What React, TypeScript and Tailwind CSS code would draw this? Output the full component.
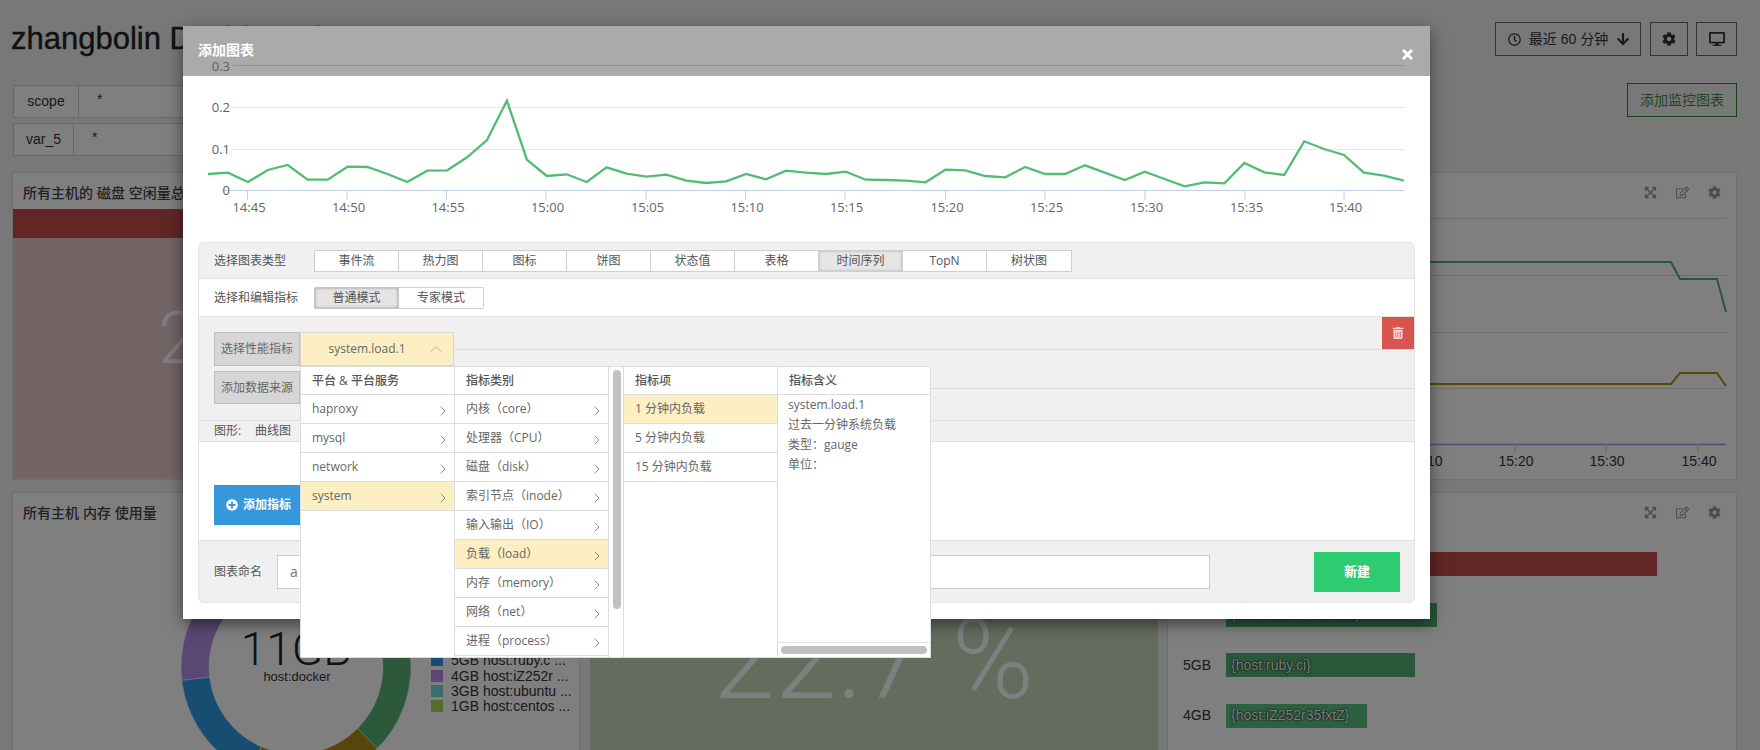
import React from 'react';
import { ChevronRight, ChevronUp } from 'lucide-react';
import {
  FaArrowDown,
  FaCog,
  FaDesktop,
  FaExpandArrowsAlt,
  FaPlusCircle,
  FaRegClock,
  FaRegEdit,
  FaTimes,
  FaTrashAlt,
} from 'react-icons/fa';

const chartTypes = ['事件流', '热力图', '图标', '饼图', '状态值', '表格', '时间序列', 'TopN', '树状图'];
const platforms = ['haproxy', 'mysql', 'network', 'system'];
const categories = [
  '内核（core）',
  '处理器（CPU）',
  '磁盘（disk）',
  '索引节点（inode）',
  '输入输出（IO）',
  '负载（load）',
  '内存（memory）',
  '网络（net）',
  '进程（process）',
];
const metrics = ['1 分钟内负载', '5 分钟内负载', '15 分钟内负载'];

// y of each minute from 14:43 to 15:43, in px
const loadSeries = [
  342, 338, 366, 330, 315, 359, 359, 320, 321, 342, 366, 332, 331, 292, 240, 122, 299, 348, 343, 366, 322, 341, 350,
  344, 362, 369, 364, 342, 358, 332, 338, 342, 335, 359, 360, 362, 367, 329, 331, 348, 352, 321, 342, 342, 316, 338,
  360, 335, 357, 379, 367, 370, 309, 337, 345, 244, 267, 285, 338, 347, 362,
].map((v, i) => `${(208 + i * 19.93).toFixed(1)},${(60 + v / 3).toFixed(1)}`);

const loadTicks = [
  ['14:45', 247.5],
  ['14:50', 347],
  ['14:55', 446.5],
  ['15:00', 546],
  ['15:05', 646],
  ['15:10', 745.5],
  ['15:15', 845],
  ['15:20', 945.5],
  ['15:25', 1045],
  ['15:30', 1145],
  ['15:35', 1245],
  ['15:40', 1344],
] as const;

const donutParts = [
  { from: 0, to: 135, color: '#56b274' },
  { from: 135, to: 203.6, color: '#ac8c12' },
  { from: 203.6, to: 263.4, color: '#2f9ae0' },
  { from: 263.4, to: 312, color: '#b48ee6' },
  { from: 312, to: 349, color: '#74dcdc' },
  { from: 349, to: 360, color: '#a4dc54' },
];

const legend = [
  { label: '5GB host:ruby.c ...', color: '#2f9ae0', y: 654 },
  { label: '4GB host:iZ252r ...', color: '#b48ee6', y: 670 },
  { label: '3GB host:ubuntu ...', color: '#74dcdc', y: 685 },
  { label: '1GB host:centos ...', color: '#a4dc54', y: 700 },
];

const memoryBars = [
  { label: '11GB', host: '{host:docker}', width: 431, color: 'bg-[#c44c4c]' },
  { label: '6GB', host: '{host:iZ25bn3sbxbZ}', width: 211, color: 'bg-[#52ae72]' },
  { label: '5GB', host: '{host:ruby.ci}', width: 189, color: 'bg-[#52ae72]' },
  { label: '4GB', host: '{host:iZ252r35fxtZ}', width: 141, color: 'bg-[#58c07e]' },
];

function arcPath(from: number, to: number) {
  const cx = 296;
  const cy = 667;
  const outer = 115;
  const inner = 87;
  const point = (r: number, deg: number) => {
    const a = ((deg - 90) * Math.PI) / 180;
    return `${(cx + r * Math.cos(a)).toFixed(2)} ${(cy + r * Math.sin(a)).toFixed(2)}`;
  };
  const large = to - from > 180 ? 1 : 0;
  return `M${point(outer, from)} A${outer} ${outer} 0 ${large} 1 ${point(outer, to)} L${point(inner, to)} A${inner} ${inner} 0 ${large} 0 ${point(inner, from)} Z`;
}

function PanelIcons() {
  return (
    <div className="absolute right-[15px] top-[13px] flex items-center gap-[19px] text-[13px] text-[#9a9a9a]">
      <FaExpandArrowsAlt />
      <FaRegEdit />
      <FaCog />
    </div>
  );
}

function MenuRow({ label, active, arrow }: { label: string; active?: boolean; arrow?: boolean }) {
  return (
    <div
      className={`flex h-[29px] items-center justify-between border-b border-[#dcdcdc] pl-[11px] pr-[3px] ${
        active ? 'bg-[#fbefc3]' : 'bg-white'
      }`}
    >
      <span className="-mt-[1px]">{label}</span>
      {arrow && <ChevronRight size={16} strokeWidth={1} className="mt-[3px] text-[#555]" />}
    </div>
  );
}

function MenuHeader({ label }: { label: string }) {
  return <div className="flex h-[28px] items-center border-b border-[#dcdcdc] pl-[11px] font-medium text-[#555]">{label}</div>;
}

function LoadChart() {
  return (
    <svg viewBox="183 60 1247 182" className="relative -mt-[16px] block h-[182px] w-[1247px]">
      <line x1="233" x2="1404" y1="65.5" y2="65.5" stroke="#939393" />
      <line x1="233" x2="1404" y1="107.5" y2="107.5" stroke="#e6e6e6" />
      <line x1="233" x2="1404" y1="149.5" y2="149.5" stroke="#e6e6e6" />
      <line x1="222" x2="1404" y1="190.5" y2="190.5" stroke="#c0d0e0" />
      {[
        ['0.3', 71],
        ['0.2', 112],
        ['0.1', 154],
        ['0', 195],
      ].map(([t, y]) => (
        <text key={t} x="230" y={y} textAnchor="end" fontSize="13" fill="#5f5f5f">
          {t}
        </text>
      ))}
      {loadTicks.map(([t, x]) => (
        <g key={t}>
          <line x1={x} x2={x} y1="190" y2="200" stroke="#c0d0e0" />
          <text x={x + 1.5} y="212" textAnchor="middle" fontSize="13" fill="#666">
            {t}
          </text>
        </g>
      ))}
      <polyline points={loadSeries.join(' ')} fill="none" stroke="#52bc74" strokeWidth="2.3" />
    </svg>
  );
}

function MetricDropdown() {
  return (
    <div className="absolute left-[117px] top-[306px] w-[631px] text-[12px] text-[#666]">
      <div className="relative flex h-[34px] w-[154px] items-center justify-center border border-[#d6d6d6] bg-[#fbefc3] pr-[26px]">
        <span className="pl-[6px]">system.load.1</span>
        <ChevronUp size={20} strokeWidth={0.8} className="absolute right-[7px] text-[#999]" />
      </div>
      <div className="flex h-[292px] border border-[#dcdcdc] bg-white">
        <div className="w-[154px] border-r border-[#dcdcdc]">
          <MenuHeader label="平台 & 平台服务" />
          {platforms.map((p) => (
            <MenuRow key={p} label={p} arrow active={p === 'system'} />
          ))}
        </div>
        <div className="w-[154px] border-r border-[#dcdcdc]">
          <MenuHeader label="指标类别" />
          {categories.map((c) => (
            <MenuRow key={c} label={c} arrow active={c === '负载（load）'} />
          ))}
        </div>
        <div className="w-[15px] border-r border-[#dcdcdc] pl-[4px] pt-[3px]">
          <div className="h-[239px] w-[8px] rounded bg-[#c1c1c1]" />
        </div>
        <div className="w-[154px] border-r border-[#dcdcdc]">
          <MenuHeader label="指标项" />
          {metrics.map((m, i) => (
            <MenuRow key={m} label={m} active={i === 0} />
          ))}
        </div>
        <div className="flex flex-1 flex-col">
          <MenuHeader label="指标含义" />
          <div className="flex-1 pl-[10px] leading-[20px]">
            <div>system.load.1</div>
            <div>过去一分钟系统负载</div>
            <div>类型：gauge</div>
            <div>单位：</div>
          </div>
          <div className="flex h-[15px] items-center border-t border-[#e4e4e4] px-[3px]">
            <div className="h-[8px] w-full rounded bg-[#c1c1c1]" />
          </div>
        </div>
      </div>
    </div>
  );
}

function AddChartModal() {
  return (
    <div className="absolute left-[183px] top-[26px] h-[593px] w-[1247px] bg-white font-['Open_Sans','Noto_Sans_CJK_SC',sans-serif] shadow-[0_5px_15px_rgba(0,0,0,0.5)]">
      <div className="flex h-[50px] items-center justify-between bg-[#aaaaaa] pl-[15px] pr-[15px]">
        <span className="-mt-[3px] text-[14px] font-bold text-white">添加图表</span>
        <FaTimes className="mt-[6px] text-[15px] text-white" />
      </div>
      <LoadChart />
      <div className="mx-[15px] h-[361px] w-[1217px] rounded-[6px] border border-[#e4e4e4] bg-[#f0f0f0] text-[12px] text-[#555]">
        <div className="flex h-[36px] items-center border-b border-[#e4e4e4] pl-[15px]">
          <span className="w-[100px]">选择图表类型</span>
          <div className="flex border border-[#cfcfcf] bg-white">
            {chartTypes.map((t) => (
              <div
                key={t}
                className={`flex h-[20px] w-[84px] items-center justify-center border-r border-[#cfcfcf] last:border-r-0 ${
                  t === '时间序列' ? 'bg-[#e6e6e6] shadow-[inset_0_0_3px_rgba(0,0,0,0.25)]' : ''
                }`}
              >
                {t}
              </div>
            ))}
          </div>
        </div>
        <div className="flex h-[38px] items-center border-b border-[#e4e4e4] bg-white pl-[15px]">
          <span className="w-[100px]">选择和编辑指标</span>
          <div className="flex h-[22px] w-[85px] items-center justify-center rounded-l-[2px] border border-[#c4c4c4] bg-[#e4e4e4] shadow-[inset_0_0_3px_rgba(0,0,0,0.35)]">
            普通模式
          </div>
          <div className="flex h-[22px] w-[85px] items-center justify-center rounded-r-[2px] border border-l-0 border-[#cfcfcf]">
            专家模式
          </div>
        </div>
        <div className="flex h-[103px]">
          <div className="w-[101px] shrink-0 pl-[15px] pt-[15px]">
            <div className="flex h-[34px] w-[86px] items-center justify-center border border-[#bdbdbd] bg-[#d6d6d6] text-[#666]">
              选择性能指标
            </div>
            <div className="mt-[5px] flex h-[33px] w-[86px] items-center justify-center border border-[#bdbdbd] bg-[#d6d6d6] text-[#666]">
              添加数据来源
            </div>
          </div>
          <div className="flex-1">
            <div className="flex h-[33px] justify-end border-b border-[#dcdcdc]">
              <div className="flex w-[32px] items-center justify-center bg-[#d9534f] text-[12px] text-[#f6d5d5]">
                <FaTrashAlt />
              </div>
            </div>
            <div className="h-[39px] border-b border-[#dcdcdc]" />
            <div className="h-[31px]" />
          </div>
        </div>
        <div className="flex h-[22px] items-center border-y border-[#e0e0e0] pl-[15px]">
          <span className="w-[41px]">图形:</span>
          <span>曲线图</span>
        </div>
        <div className="h-[98px] bg-white pl-[15px] pt-[43px]">
          <div className="flex h-[40px] w-[100px] items-center bg-[#3498db] pl-[12px] font-bold text-white">
            <FaPlusCircle className="mr-[5px] text-[12px]" />
            添加指标
          </div>
        </div>
        <div className="flex h-[62px] items-center border-t border-[#dcdcdc] pl-[15px]">
          <span className="w-[63px]">图表命名</span>
          <input
            readOnly
            value="a"
            className="h-[34px] w-[933px] border border-[#cfcfcf] bg-white pl-[12px] text-[14px] text-[#777] outline-none"
          />
          <div className="ml-[104px] flex h-[40px] w-[86px] items-center justify-center bg-[#2ecc71] text-[13px] font-bold text-white">
            新建
          </div>
        </div>
      </div>
      <MetricDropdown />
    </div>
  );
}

export default function App() {
  return (
    <div className="relative h-[750px] w-[1760px] overflow-hidden bg-[#f0f0f0] font-['Liberation_Sans','Noto_Sans_CJK_SC',sans-serif] text-[#333]">
      <header className="flex h-[83px] justify-between pl-[11px] pr-[23px] pt-[22px]">
        <h1 className="text-[31px] leading-[34px] text-[#222] [-webkit-text-stroke:0.4px_#222]">zhangbolin Dashboard</h1>
        <div className="flex gap-[8px] text-[14px] text-[#333]">
          <div className="mr-[1px] flex h-[34px] w-[146px] items-center justify-center gap-[8px] border border-[#666] pl-[2px]">
            <FaRegClock className="text-[13px]" />
            最近 60 分钟
            <FaArrowDown className="text-[14px]" />
          </div>
          <div className="flex h-[34px] w-[38px] items-center justify-center border border-[#666]">
            <FaCog className="text-[14px]" />
          </div>
          <div className="flex h-[34px] w-[41px] items-center justify-center border border-[#666]">
            <FaDesktop className="text-[16px]" />
          </div>
        </div>
      </header>

      <div className="flex h-[89px] justify-between pl-[13px] pr-[23px] text-[14px]">
        <div className="pt-[2px]">
          <div className="flex h-[33px] w-[420px] items-center border border-[#cfcfcf] bg-white">
            <span className="flex h-full w-[65px] items-center justify-center border-r border-[#cfcfcf]">scope</span>
            <span className="-mt-[5px] pl-[18px]">*</span>
          </div>
          <div className="mt-[5px] flex h-[33px] w-[420px] items-center border border-[#cfcfcf] bg-white">
            <span className="flex h-full w-[60px] items-center justify-center border-r border-[#cfcfcf]">var_5</span>
            <span className="-mt-[5px] pl-[18px]">*</span>
          </div>
        </div>
        <div className="flex h-[34px] w-[110px] items-center justify-center border border-[#2f7d34] text-[#3f8f45]">
          添加监控图表
        </div>
      </div>

      <div className="grid grid-cols-[568px_568px_570px] grid-rows-[308px_300px] gap-x-[9.5px] gap-y-[12px] pl-[12px]">
        <div className="flex flex-col border border-[#dedede] bg-white">
          <div className="flex h-[36px] items-center pl-[10px] pt-[4px] text-[14px] font-medium text-[#444]">
            所有主机的 磁盘 空闲量总和
          </div>
          <div className="h-[29px] shrink-0 bg-[#c44c4c]" />
          <div className="flex flex-1 items-center justify-center bg-[#e6caca] pb-[40px] pl-[8px] font-['Roboto',sans-serif] text-[73px] font-light text-white">
            2.863 TB
          </div>
        </div>
        <div className="border border-[#dedede] bg-white" />
        <div className="relative border border-[#dedede] bg-white">
          <PanelIcons />
          <svg viewBox="1168 173 568 306" className="block h-[306px] w-[568px]">
            {[218, 275, 332, 388].map((y) => (
              <line key={y} x1="1178" x2="1726" y1={y + 0.5} y2={y + 0.5} stroke="#dcdcdc" />
            ))}
            <line x1="1178" x2="1726" y1="444.5" y2="444.5" stroke="#b48ee6" strokeWidth="1.5" />
            {[
              ['15:10', 1424],
              ['15:20', 1515],
              ['15:30', 1606],
              ['15:40', 1698],
            ].map(([t, x]) => (
              <g key={t}>
                <line x1={x} x2={x} y1="444" y2="453" stroke="#c0d0e0" />
                <text x={Number(x) + 1} y="466" textAnchor="middle" fontSize="14" fill="#333">
                  {t}
                </text>
              </g>
            ))}
            <polyline points="1178,262 1671,262 1680,279 1717,279 1726,312" fill="none" stroke="#52ae72" strokeWidth="2" />
            <polyline points="1178,384 1671,384 1680,373 1717,373 1726,386" fill="none" stroke="#b09010" strokeWidth="2" />
          </svg>
        </div>

        <div className="relative border border-[#dedede] bg-white">
          <div className="absolute left-[10px] top-[10px] text-[14px] font-medium text-[#444]">所有主机 内存 使用量</div>
          <svg viewBox="13 493 566 298" className="block h-[298px] w-[566px]">
            {donutParts.map((p) => (
              <path key={p.from} d={arcPath(p.from, p.to)} fill={p.color} stroke="#fff" strokeWidth="0.5" />
            ))}
            <text x="296" y="665" textAnchor="middle" fontSize="46" fontFamily="Roboto" fontWeight="300" fill="#222">
              11GB
            </text>
            <text x="297" y="681" textAnchor="middle" fontSize="13" fill="#333">
              host:docker
            </text>
            {legend.map((l) => (
              <g key={l.label}>
                <rect x="431" y={l.y} width="12" height="12" fill={l.color} />
                <text x="451" y={l.y + 11} fontSize="14" fill="#333">
                  {l.label}
                </text>
              </g>
            ))}
          </svg>
        </div>
        <div className="flex items-center justify-center bg-[#c8d8bc] pt-[36px] font-['Roboto',sans-serif] text-[111px] font-light text-white">
          22.7 %
        </div>
        <div className="relative border border-[#dedede] bg-white pt-[59px]">
          <PanelIcons />
          <div className="flex flex-col gap-[26.5px]">
            {memoryBars.map((b) => (
              <div key={b.label} className="flex h-[24px] items-center gap-[15px] text-[14px]">
                <span className="w-[43px] text-right">{b.label}</span>
                <div
                  className={`flex h-full items-center pl-[5px] text-white [text-shadow:0_0_2px_#000,0_0_1px_#000] ${b.color}`}
                  style={{ width: b.width }}
                >
                  {b.host}
                </div>
              </div>
            ))}
          </div>
        </div>
      </div>

      <div className="absolute inset-0 bg-black/50" />
      <AddChartModal />
    </div>
  );
}
